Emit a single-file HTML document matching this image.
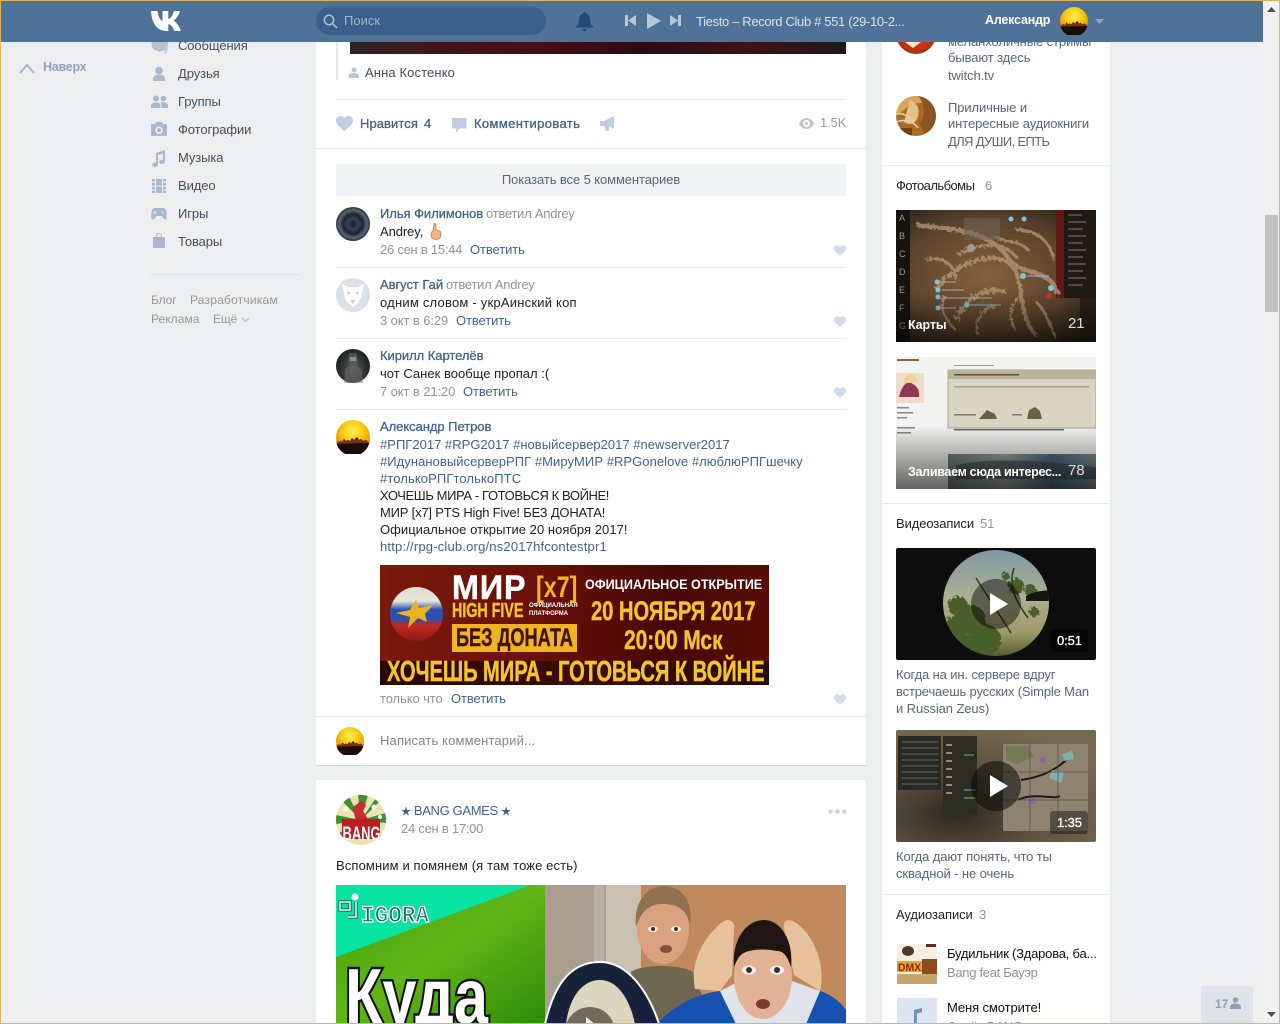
<!DOCTYPE html>
<html lang="ru"><head><meta charset="utf-8"><title>VK</title>
<style>
html,body{margin:0;padding:0;width:1280px;height:1024px;overflow:hidden;background:#edeef0}
body{font-family:"Liberation Sans","Noto Sans CJK SC",sans-serif;font-size:13px;color:#000;position:relative}
.t,.b,svg.a{position:absolute}
.t{white-space:nowrap;line-height:17px;letter-spacing:-.1px}
.l{color:#2a5885}.g{color:#939393}.n{color:#42648b}.m{color:#454f5b}.c{color:#222}
.s{color:#656565}.w{color:#fff}
.nm{color:#42648b;-webkit-text-stroke:.3px #42648b;letter-spacing:-.05px}
.h{background:#e7e8ec;height:1px}
.ava{position:absolute;border-radius:50%;overflow:hidden}
</style></head><body>

<svg width="0" height="0" style="position:absolute"><defs>
<radialGradient id="sg" cx=".5" cy=".32" r=".62"><stop offset="0" stop-color="#ffee5a"/><stop offset=".5" stop-color="#f9cb0e"/><stop offset=".85" stop-color="#ee9c06"/><stop offset="1" stop-color="#d97f05"/></radialGradient>
<filter id="rough" x="-5%" y="-5%" width="110%" height="110%"><feTurbulence type="fractalNoise" baseFrequency=".35" numOctaves="2" seed="4"/><feDisplacementMap in="SourceGraphic" scale="7"/></filter>
<symbol id="sun" viewBox="0 0 34 34"><circle cx="17" cy="17" r="17" fill="url(#sg)"/><path d="M1 23l3-2 2 1 2-3 2 2 2-1 2 1 2-3 2 2 3-3 2 3 2-1 2 2 3-1 3 3v1a17 17 0 0 1-32 1z" fill="#1a0c06"/><path d="M0 21l5-1 6 1 7-2 8 1 8 1v2l-34 1z" fill="#c85a08" opacity=".5"/></symbol>
<symbol id="hrt" viewBox="0 0 17 15"><path d="M8.500 15C3 10.500 0 8 0 4.500 0 2 2 0 4.500 0c1.600 0 3 .8 4 2.300C9.500.8 11 0 12.500 0 15 0 17 2 17 4.500 17 8 14 10.500 8.500 15z" fill="#cfdbe8"/></symbol>
</defs></svg>

<!-- main column card -->
<div class="b" style="left:316px;top:0;width:550px;height:765px;background:#fff;border-bottom:1px solid #d7d8db;border-right:1px solid #e7e8ec"></div>
<div class="b" style="left:316px;top:780px;width:550px;height:244px;background:#fff;border-radius:2px 2px 0 0;border-right:1px solid #e7e8ec"></div>
<!-- right column card -->
<div class="b" style="left:881px;top:0;width:230px;height:1024px;background:#fff;border-left:1px solid #e7e8ec;border-right:1px solid #e7e8ec;box-sizing:border-box"></div>

<!-- left menu -->
<svg class="a" style="left:19px;top:61px" width="16" height="14" viewBox="0 0 16 14"><path d="M1 12L8 4l7 8" fill="none" stroke="#a9b7c8" stroke-width="2"/></svg>
<div class="t" style="left:43px;top:59px;color:#93a3b8;font-weight:bold;font-size:12.500px;letter-spacing:-.25px">Наверх</div>

<svg class="a" style="left:151px;top:38px" width="18" height="16" viewBox="0 0 18 16"><path d="M8 0a7.500 6.500 0 0 0 0 13l-1 1 4-1a7 6 0 0 0-3-13z" fill="#b3c1d3"/><path d="M15 6c2 2 3 6 0 8l1 2-3-1z" fill="#c2cedc"/></svg>
<div class="t m" style="left:178px;top:37px">Сообщения</div>
<svg class="a" style="left:151px;top:66px" width="16" height="16" viewBox="0 0 16 16"><circle cx="8" cy="4.500" r="3.800" fill="#a9b9cd"/><path d="M2 15v-2c0-3 3-4.500 6-4.500s6 1.500 6 4.500v2z" fill="#a9b9cd"/></svg>
<div class="t m" style="left:178px;top:65px">Друзья</div>
<svg class="a" style="left:151px;top:95px" width="17" height="14" viewBox="0 0 17 14"><circle cx="5" cy="3.500" r="3" fill="#a9b9cd"/><circle cx="12.500" cy="3.500" r="2.800" fill="#a9b9cd"/><path d="M0 13v-2c0-2.500 2.500-3.500 5-3.500s4.500 1 4.500 3.500v2zM10.500 13v-3c0-1-.5-2-1-2.500 3-1 7.500 0 7.500 3v2.500z" fill="#a9b9cd"/></svg>
<div class="t m" style="left:178px;top:93px">Группы</div>
<svg class="a" style="left:151px;top:122px" width="16" height="15" viewBox="0 0 16 15"><path fill-rule="evenodd" d="M1 2h3l1-2h6l1 2h3a1 1 0 0 1 1 1v10a1 1 0 0 1-1 1H1a1 1 0 0 1-1-1V3a1 1 0 0 1 1-1zm7 2.500a3.800 3.800 0 1 0 0 7.600 3.800 3.800 0 0 0 0-7.600z" fill="#a9b9cd"/><circle cx="8" cy="8.300" r="2" fill="#a9b9cd"/></svg>
<div class="t m" style="left:178px;top:121px">Фотографии</div>
<svg class="a" style="left:151px;top:150px" width="16" height="17" viewBox="0 0 16 17"><path d="M5 3l9-3v11.500c0 1.500-1.300 2.500-3 2.500s-2.700-1-2.700-2.200 1.300-2.300 3.700-2.100V3.500L7 5v9.500C7 16 5.700 17 4 17s-2.700-1-2.700-2.200S2.600 12.500 5 12.700z" fill="#a9b9cd"/></svg>
<div class="t m" style="left:178px;top:149px">Музыка</div>
<svg class="a" style="left:152px;top:179px" width="14" height="14" viewBox="0 0 14 14"><g fill="#a9b9cd"><rect x="4" y="0" width="6" height="6.500"/><rect x="4" y="7.500" width="6" height="6.500"/><rect x="0" y="0" width="3" height="2.500"/><rect x="0" y="3.800" width="3" height="2.800"/><rect x="0" y="7.900" width="3" height="2.500"/><rect x="0" y="11.500" width="3" height="2.500"/><rect x="11" y="0" width="3" height="2.500"/><rect x="11" y="3.800" width="3" height="2.800"/><rect x="11" y="7.900" width="3" height="2.500"/><rect x="11" y="11.500" width="3" height="2.500"/></g></svg>
<div class="t m" style="left:178px;top:177px">Видео</div>
<svg class="a" style="left:151px;top:208px" width="16" height="12" viewBox="0 0 16 12"><path fill-rule="evenodd" d="M4 0h8c2 0 3 1.500 3.500 5 .5 3 .5 6-1 6.500-1.500.5-3-2.500-4-3.500H5.500c-1 1-2.500 4-4 3.500S0 8 .5 5C1 1.500 2 0 4 0zm-.5 3v1.200H2.300v1h1.200v1.200h1V5.200h1.200v-1H4.500V3zm8 .5a.8.8 0 1 0 0 1.600.8.8 0 0 0 0-1.600z" fill="#a9b9cd"/></svg>
<div class="t m" style="left:178px;top:205px">Игры</div>
<svg class="a" style="left:153px;top:233px" width="12" height="15" viewBox="0 0 12 15"><path d="M0 4h3V3a3 3 0 0 1 6 0v1h3v11H0zM4 4h4V3a2 2 0 0 0-4 0z" fill="#a9b9cd"/></svg>
<div class="t m" style="left:178px;top:233px">Товары</div>
<div class="b h" style="left:151px;top:274px;width:149px;background:#dfe2e8"></div>
<div class="t" style="left:151px;top:292px;font-size:12px;color:#90989f">Блог</div>
<div class="t" style="left:190px;top:292px;font-size:12px;color:#90989f;letter-spacing:.2px">Разработчикам</div>
<div class="t" style="left:151px;top:311px;font-size:12px;color:#90989f;letter-spacing:.05px">Реклама</div>
<div class="t" style="left:213px;top:311px;font-size:12px;color:#90989f">Ещё</div>
<svg class="a" style="left:241px;top:317px" width="9" height="6" viewBox="0 0 9 6"><path d="M1 1l3.500 3.500L8 1" fill="none" stroke="#b5bcc6" stroke-width="1.200"/></svg>

<!-- post top -->
<div class="b" style="left:350px;top:42px;width:496px;height:12px;background:linear-gradient(90deg,#2a2422 0,#3d1a1a 12%,#431015 35%,#2c0d12 60%,#3a1415 80%,#1f1716 100%)"></div>
<div class="b" style="left:336px;top:42px;width:2px;height:38px;background:#e7e8ec"></div>
<svg class="a" style="left:349px;top:67px" width="10" height="12" viewBox="0 0 10 12"><circle cx="5" cy="3" r="2.500" fill="#b9c6d6"/><path d="M0 11V9c0-2 2-3 5-3s5 1 5 3v2z" fill="#b9c6d6"/></svg>
<div class="t m" style="left:365px;top:64px;letter-spacing:.12px">Анна Костенко</div>
<div class="b h" style="left:336px;top:99px;width:510px"></div>
<svg class="a" style="left:336px;top:116px" width="17" height="15" viewBox="0 0 17 15"><path d="M8.500 15C3 10.500 0 8 0 4.500 0 2 2 0 4.500 0c1.600 0 3 .8 4 2.300C9.500.8 11 0 12.500 0 15 0 17 2 17 4.500 17 8 14 10.500 8.500 15z" fill="#c0cfe0"/></svg>
<div class="t nm" style="left:360px;top:115px;letter-spacing:.07px">Нравится</div>
<div class="t nm" style="left:424px;top:115px">4</div>
<svg class="a" style="left:452px;top:118px" width="15" height="15" viewBox="0 0 15 15"><path d="M0 0h14.500v10.500H8L4 14.500v-4H0z" fill="#c0cfe0"/></svg>
<div class="t nm" style="left:474px;top:115px;letter-spacing:.36px">Комментировать</div>
<svg class="a" style="left:600px;top:116px" width="15" height="15" viewBox="0 0 15 15"><path d="M0 5h4l10-5v13L9 10.500V15H6l-1.500-5H0z" fill="#c0cfe0"/></svg>
<svg class="a" style="left:799px;top:118px" width="15" height="11" viewBox="0 0 15 11"><path fill-rule="evenodd" d="M7.500 0C11 0 13.500 2.500 15 5.500 13.500 8.500 11 11 7.500 11S1.500 8.500 0 5.500C1.500 2.500 4 0 7.500 0zm0 2a3.500 3.500 0 1 0 0 7 3.500 3.500 0 0 0 0-7zm0 2a1.500 1.500 0 1 1 0 3 1.500 1.500 0 0 1 0-3z" fill="#bcc5cf"/></svg>
<div class="t" style="left:820px;top:114px;color:#939da8">1.5K</div>
<div class="b h" style="left:316px;top:148px;width:550px"></div>

<div class="b" style="left:336px;top:164px;width:510px;height:32px;background:#f0f2f5"></div>
<div class="t" style="left:336px;top:171px;width:510px;text-align:center;color:#55677d">Показать все 5 комментариев</div>

<!-- comment 1 -->
<div class="ava" style="left:336px;top:207px;width:34px;height:34px;background:radial-gradient(circle at 50% 50%,#101a28 0,#37465c 22%,#1b2230 40%,#5a6474 58%,#12161e 76%,#1a1e26 100%)"></div>
<div class="t nm" style="left:380px;top:205px">Илья Филимонов</div>
<div class="t g" style="left:486px;top:205px;letter-spacing:-.25px">ответил Andrey</div>
<div class="t c" style="left:380px;top:223px">Andrey,</div>
<svg class="a" style="left:428px;top:223px" width="14" height="17" viewBox="0 0 14 17"><path d="M6 1c1-1 2 0 2 1v5l2 .5c2 .5 3 1 3 3 0 3-1 6-5 6-3 0-5-2-5-5 0-2 1-3 2-3.500z" fill="#f2b48b" stroke="#d8703c" stroke-width=".8"/></svg>
<div class="t g" style="left:380px;top:241px;letter-spacing:-.25px">26 сен в 15:44</div>
<div class="t n" style="left:470px;top:241px">Ответить</div>
<svg class="a" style="left:834px;top:245px" width="12" height="11"><use href="#hrt"/></svg>
<div class="b h" style="left:336px;top:267px;width:510px"></div>

<!-- comment 2 -->
<div class="ava" style="left:336px;top:278px;width:34px;height:34px;background:#d9e0ea"></div>
<svg class="a" style="left:336px;top:278px" width="34" height="34" viewBox="0 0 34 34"><path d="M6 6l6 3h10l6-3-2 9c0 5-4 11-9 14-5-3-9-9-9-14z" fill="#fff"/><circle cx="12.500" cy="15" r="1.400" fill="#c3ccd8"/><circle cx="21.500" cy="15" r="1.400" fill="#c3ccd8"/><path d="M14.500 22h5l-2.500 4z" fill="#c3ccd8"/></svg>
<div class="t nm" style="left:380px;top:276px">Август Гай</div>
<div class="t g" style="left:446px;top:276px;letter-spacing:-.25px">ответил Andrey</div>
<div class="t c" style="left:380px;top:294px;letter-spacing:.22px">одним словом - укрАинский коп</div>
<div class="t g" style="left:380px;top:312px">3 окт в 6:29</div>
<div class="t n" style="left:456px;top:312px">Ответить</div>
<svg class="a" style="left:834px;top:316px" width="12" height="11"><use href="#hrt"/></svg>
<div class="b h" style="left:336px;top:338px;width:510px"></div>

<!-- comment 3 -->
<div class="ava" style="left:336px;top:349px;width:34px;height:34px;background:radial-gradient(ellipse at 50% 60%,#4d5350 0,#3a403e 35%,#1d2222 70%,#2f3332 100%)"></div>
<svg class="a" style="left:336px;top:349px" width="34" height="34" viewBox="0 0 34 34"><path d="M13 4h8l1 8-2 3 6 6 1 13H8l1-13 5-6-2-3z" fill="#6d7270" opacity=".5"/><rect x="14" y="8" width="6" height="4" fill="#c9cdc9" opacity=".5"/></svg>
<div class="t nm" style="left:380px;top:347px">Кирилл Картелёв</div>
<div class="t c" style="left:380px;top:365px;letter-spacing:.02px">чот Санек вообще пропал :(</div>
<div class="t g" style="left:380px;top:383px">7 окт в 21:20</div>
<div class="t n" style="left:463px;top:383px">Ответить</div>
<svg class="a" style="left:834px;top:387px" width="12" height="11"><use href="#hrt"/></svg>
<div class="b h" style="left:336px;top:409px;width:510px"></div>

<!-- comment 4 -->
<svg class="a" style="left:336px;top:420px" width="34" height="34"><use href="#sun"/></svg>
<div class="t nm" style="left:380px;top:418px">Александр Петров</div>
<div class="t n" style="left:380px;top:436px;letter-spacing:.02px">#РПГ2017 #RPG2017 #новыйсервер2017 #newserver2017</div>
<div class="t n" style="left:380px;top:453px;letter-spacing:.05px">#ИдунановыйсерверРПГ #МируМИР #RPGonelove #люблюРПГшечку</div>
<div class="t n" style="left:380px;top:470px;letter-spacing:.1px">#толькоРПГтолькоПТС</div>
<div class="t c" style="left:380px;top:487px;letter-spacing:-.4px">ХОЧЕШЬ МИРА - ГОТОВЬСЯ К ВОЙНЕ!</div>
<div class="t c" style="left:380px;top:504px;letter-spacing:-.2px">МИР [x7] PTS High Five! БЕЗ ДОНАТА!</div>
<div class="t c" style="left:380px;top:521px;letter-spacing:.04px">Официальное открытие 20 ноября 2017!</div>
<div class="t n" style="left:380px;top:538px;letter-spacing:.19px">http://rpg-club.org/ns2017hfcontestpr1</div>

<!-- banner -->
<div class="b" style="left:380px;top:565px;width:389px;height:120px;background:#4a0906;overflow:hidden">
  <div class="b" style="left:0;top:0;width:389px;height:120px;background:linear-gradient(90deg,#7a1a0c 0,#6a1009 40%,#470806 75%,#5a0d08 100%)"></div>
  <div class="b" style="left:0;top:96px;width:389px;height:24px;background:linear-gradient(90deg,#2a0a04,#3a0c05 50%,#2a0a04)"></div>
  <div class="b" style="left:10px;top:22px;width:53px;height:54px;border-radius:50%;background:linear-gradient(180deg,#dfe0d6 0,#e8e4d8 26%,#2c50b0 42%,#2c50b0 58%,#c4271e 72%,#8a1a12 100%)"></div>
  <svg class="a" style="left:13px;top:32px" width="48" height="36" viewBox="0 0 48 36"><path d="M3 16l14-3 6-10 3 8 14-3-8 9 2 8-9-4-10 10 2-11z" fill="#e8b320"/></svg>
  <div class="t w" style="left:72px;top:5px;font:bold 34px/36px 'Liberation Sans',sans-serif;letter-spacing:1px;transform:scaleX(.95);transform-origin:0 0;-webkit-text-stroke:.5px #fff">МИР</div>
  <div class="t" style="left:156px;top:5px;font:bold 30px/36px 'Liberation Sans',sans-serif;color:#f0b422;transform:scaleX(.78);transform-origin:0 0">[x7]</div>
  <div class="t" style="left:72px;top:33px;font:bold 20px/26px 'Liberation Sans',sans-serif;color:#f5c32b;transform:scaleX(.72);transform-origin:0 0;-webkit-text-stroke:.4px #f5c32b">HIGH FIVE</div>
  <div class="t w" style="left:149px;top:37px;font:bold 6px/8px 'Liberation Sans',sans-serif;letter-spacing:0">ОФИЦИАЛЬНАЯ</div>
  <div class="t w" style="left:149px;top:45px;font:bold 6px/8px 'Liberation Sans',sans-serif;letter-spacing:0">ПЛАТФОРМА</div>
  <div class="b" style="left:72px;top:59px;width:125px;height:28px;background:#f0b422"></div>
  <div class="t" style="left:76px;top:59px;font:bold 25px/29px 'Liberation Sans',sans-serif;color:#421405;transform:scaleX(.73);transform-origin:0 0;-webkit-text-stroke:.4px #421405">БЕЗ ДОНАТА</div>
  <div class="t w" style="left:205px;top:11px;font:bold 13.500px/17px 'Liberation Sans',sans-serif;letter-spacing:0;transform:scaleX(.935);transform-origin:0 0">ОФИЦИАЛЬНОЕ ОТКРЫТИЕ</div>
  <div class="t" style="left:211px;top:30px;font:bold 27px/32px 'Liberation Sans',sans-serif;color:#f5c32b;transform:scaleX(.75);transform-origin:0 0;-webkit-text-stroke:.4px #f5c32b">20 НОЯБРЯ 2017</div>
  <div class="t" style="left:244px;top:59px;font:bold 27px/32px 'Liberation Sans',sans-serif;color:#f5c32b;transform:scaleX(.78);transform-origin:0 0;-webkit-text-stroke:.4px #f5c32b">20:00 Мск</div>
  <div class="t" style="left:7px;top:92px;font:bold 29px/30px 'Liberation Sans',sans-serif;color:#f5c32b;transform:scaleX(.695);transform-origin:0 0;-webkit-text-stroke:.5px #f5c32b">ХОЧЕШЬ МИРА - ГОТОВЬСЯ К ВОЙНЕ</div>
</div>
<div class="t g" style="left:380px;top:690px">только что</div>
<div class="t n" style="left:451px;top:690px">Ответить</div>
<svg class="a" style="left:834px;top:694px" width="12" height="11"><use href="#hrt"/></svg>
<div class="b h" style="left:316px;top:716px;width:550px"></div>
<svg class="a" style="left:336px;top:727px" width="28" height="28"><use href="#sun"/></svg>
<div class="t" style="left:380px;top:732px;color:#7f8790;letter-spacing:.16px">Написать комментарий...</div>

<!-- post 2 -->
<svg class="a" style="left:336px;top:795px" width="50" height="50" viewBox="0 0 50 50">
  <defs><clipPath id="bc"><circle cx="25" cy="25" r="25"/></clipPath></defs>
  <g clip-path="url(#bc)">
  <rect width="50" height="50" fill="#e9e2b4"/>
  <g fill="#3f8f2a"><path d="M25 25L0 0h12zM25 25L22 0h10zM25 25L42 0h8zM25 25L50 18v10zM25 25L50 44v6zM25 25L0 20v9zM25 25L0 40v10z"/></g>
  <path d="M17 12l8-6 5 4-3 6 5 8-6 5-7-6z" fill="#c92d2d"/>
  <rect x="6" y="24" width="38" height="20" fill="#bb1d24"/>
  <circle cx="10" cy="14" r="2.500" fill="#fff"/><circle cx="38" cy="12" r="2.500" fill="#fff"/><circle cx="44" cy="22" r="2" fill="#fff"/>
  </g>
  <text x="6.500" y="45" font-family="Liberation Sans, sans-serif" font-size="19" font-weight="bold" fill="#fff" textLength="38" lengthAdjust="spacingAndGlyphs">BANG</text>
</svg>
<div class="t n" style="left:401px;top:802px;letter-spacing:-.35px"><span style="font-size:10px">★</span> BANG GAMES <span style="font-size:10px">★</span></div>
<div class="t g" style="left:401px;top:820px;letter-spacing:-.25px">24 сен в 17:00</div>
<svg class="a" style="left:828px;top:809px" width="19" height="5" viewBox="0 0 19 5"><circle cx="2.500" cy="2.500" r="2.300" fill="#cfd5dc"/><circle cx="9.500" cy="2.500" r="2.300" fill="#cfd5dc"/><circle cx="16.500" cy="2.500" r="2.300" fill="#cfd5dc"/></svg>
<div class="t c" style="left:336px;top:857px;letter-spacing:.12px">Вспомним и помянем (я там тоже есть)</div>

<!-- big video thumb -->
<svg class="a" style="left:336px;top:885px" width="510" height="139" viewBox="0 0 510 139">
  <defs>
    <linearGradient id="lf" x1="0" y1="0" x2="1" y2="1"><stop offset="0" stop-color="#3ea011"/><stop offset=".5" stop-color="#62b516"/><stop offset="1" stop-color="#2f8a0a"/></linearGradient>
  </defs>
  <rect width="209" height="139" fill="url(#lf)"/>
  <path d="M0 0h195L0 72z" fill="#07e3a0"/>
  <rect x="209" width="301" height="139" fill="#c1895c"/>
  <rect x="209" width="96" height="139" fill="#a99e90"/>
  <rect x="270" width="35" height="139" fill="#c8c0b0"/>
  <rect x="258" width="10" height="139" fill="#b8b0a2"/>
  <path d="M293 139l2-52c10-8 50-8 62 0l20 52z" fill="#6e6650"/>
  <ellipse cx="327" cy="44" rx="26" ry="35" fill="#d9a27f"/>
  <path d="M300 42c-3-26 12-41 28-41s30 14 26 38c-4-16-14-20-28-20-12 0-20 6-26 23z" fill="#91714f"/>
  <ellipse cx="317" cy="44" rx="5" ry="3" fill="#f5ecdf"/><ellipse cx="340" cy="44" rx="5" ry="3" fill="#f5ecdf"/>
  <circle cx="317" cy="44" r="2" fill="#333"/><circle cx="340" cy="44" r="2" fill="#333"/>
  <ellipse cx="330" cy="64" rx="6" ry="4" fill="#8c4c40"/>
  <path d="M321 139c16-18 38-30 63-33l16 33zM470 139l14-33c10 3 20 10 26 19v14z" fill="#1951b0"/>
  <path d="M400 139l-16-33 20-10 52 0 28 10-14 33z" fill="#dfe3ea"/>
  <path d="M359 104C354 80 365 55 385 38c7-6 15-2 13 6l-2 46-12 16zM484 106c6-26-6-56-24-68-8-6-14-2-12 6l10 46z" fill="#e7c29c"/>
  <ellipse cx="427" cy="92" rx="29" ry="42" fill="#e2b296"/>
  <path d="M398 82c-2-28 12-46 29-47s31 20 28 47c-4-12-8-16-14-16-10-2-20-2-28 0-8 2-11 6-15 16z" fill="#1f1512"/>
  <ellipse cx="413" cy="85" rx="7" ry="4.500" fill="#f8f2ea"/><ellipse cx="441" cy="85" rx="7" ry="4.500" fill="#f8f2ea"/>
  <circle cx="413" cy="85" r="3" fill="#33302e"/><circle cx="441" cy="85" r="3" fill="#33302e"/>
  <ellipse cx="427" cy="119" rx="7" ry="5" fill="#7c3a33"/>
  <path d="M209 139c8-34 22-62 55-62 30 0 50 34 59 62z" fill="#16223a" stroke="#fff" stroke-width="2"/>
  <path d="M230 139c3-26 16-44 34-44s30 20 35 44z" fill="#ddd5bf"/>
  <circle cx="254" cy="147" r="25" fill="#4e463e" opacity=".75"/>
  <path d="M250 132v8h10z" fill="#fff"/>
  <path d="M4 17h10v8H4zM12 32h8V17" fill="none" stroke="#16423a" stroke-width="3"/>
  <path d="M4 17h10v8H4zM12 32h8V17" fill="none" stroke="#fff" stroke-width="1.500"/>
  <circle cx="19" cy="12" r="3.500" fill="#fff"/>
  <text x="25" y="37" font-family="Liberation Mono, monospace" font-size="23" font-weight="bold" fill="#1c6e54" stroke="#fff" stroke-width="1.300" textLength="68" lengthAdjust="spacingAndGlyphs">IGORA</text>
  <text x="9" y="138" font-family="Liberation Sans, sans-serif" font-size="78" font-weight="bold" fill="#fff" stroke="#111" stroke-width="5" paint-order="stroke" textLength="143" lengthAdjust="spacingAndGlyphs">Куда</text>
</svg>

<!-- right column -->
<div class="ava" style="left:896px;top:14px;width:40px;height:40px;background:radial-gradient(circle at 50% 40%,#e23c1c 0,#cc3018 55%,#7d3a12 88%)"></div>
<svg class="a" style="left:905px;top:42px" width="18" height="8"><path d="M0 0l8 6 8-6z" fill="#f7e6d8"/></svg>
<div class="t" style="left:948px;top:33px;color:#55677d">меланхоличные стримы</div>
<div class="t" style="left:948px;top:49px;color:#55677d">бывают здесь</div>
<div class="t s" style="left:948px;top:67px">twitch.tv</div>
<svg class="a" style="left:896px;top:96px" width="40" height="40" viewBox="0 0 40 40"><defs><clipPath id="ac"><circle cx="20" cy="20" r="20"/></clipPath></defs><g clip-path="url(#ac)"><rect width="40" height="40" fill="#a96c28"/><path d="M0 0h40v12C30 6 18 4 8 14L0 20z" fill="#d7a45a"/><path d="M22 0c6 6 8 18 2 28l6 12h10V0z" fill="#8a5520"/><path d="M14 4c6 2 10 8 8 16s-8 10-14 6" fill="#e4c08a"/><path d="M0 26c10-4 18 0 22 6M0 18c8-2 14 4 18 8" stroke="#e9d2ac" stroke-width="1.500" fill="none"/><path d="M0 32h16v8H0z" fill="#6d4315"/></g></svg>
<div class="t" style="left:948px;top:99px;color:#55677d">Приличные и</div>
<div class="t" style="left:948px;top:115px;color:#55677d">интересные аудиокниги</div>
<div class="t" style="left:948px;top:133px;color:#656565;letter-spacing:-.65px">ДЛЯ ДУШИ, ЕПТЬ</div>
<div class="b h" style="left:882px;top:165px;width:228px"></div>
<div class="t c" style="left:896px;top:177px;letter-spacing:-.55px">Фотоальбомы</div>
<div class="t g" style="left:985px;top:177px">6</div>

<!-- album 1 -->
<svg class="a" style="left:896px;top:210px" width="200" height="132" viewBox="0 0 200 132">
  <defs><radialGradient id="map" cx=".45" cy=".5" r=".65"><stop offset="0" stop-color="#85603c"/><stop offset=".65" stop-color="#5c432c"/><stop offset="1" stop-color="#2b241b"/></radialGradient>
  <linearGradient id="bot" x1="0" y1="0" x2="0" y2="1"><stop offset="0" stop-color="#000" stop-opacity="0"/><stop offset="1" stop-color="#000" stop-opacity=".5"/></linearGradient></defs>
  <rect width="200" height="132" fill="url(#map)" rx="2"/>
  <rect width="14" height="132" fill="#17140f"/>
  <rect x="168" width="32" height="88" fill="#211913"/><rect x="160" width="8" height="88" fill="#5f1a16"/>
  <rect x="184" y="88" width="16" height="44" fill="#2a2119"/>
  <g fill="none" stroke="#b59a78" opacity=".75" filter="url(#rough)">
    <path d="M20 15C60 20 90 20 110 45c15 25 45 10 52 40" stroke-width="4.500"/>
    <path d="M40 80c20-30 60-40 75-25s5 50 25 70M60 110c10-20 25-35 50-28" stroke-width="4"/>
    <path d="M120 20c25 0 35 15 38 30M30 50c15-5 30 5 30 20M62 45c25-15 50-12 60 5M140 92c10 8 14 24 20 36M100 28c12 4 24 2 34 14" stroke-width="3"/>
    <path d="M60 120c-8-6-20-24-10-34M82 125c-4-14 2-26 18-30M120 120c-8-10-6-24 2-32" stroke-width="2.500"/>
  </g>
  <path d="M68 8h36v22H68z" fill="#6f6553" opacity=".55"/>
  <g fill="#7fc4d9"><circle cx="41" cy="72" r="2.500"/><circle cx="42" cy="80" r="2.500"/><circle cx="42" cy="87" r="2.500"/><circle cx="42" cy="98" r="2.500"/><circle cx="71" cy="95" r="2.500"/><circle cx="127" cy="66" r="3"/><circle cx="155" cy="78" r="3"/><circle cx="115" cy="9" r="2.500"/><circle cx="128" cy="9" r="2.500"/><circle cx="75" cy="38" r="4" fill="#9a9f9d"/></g>
  <circle cx="153" cy="86" r="3" fill="#c33"/>
  <g font-family="Liberation Sans, sans-serif" font-size="9" fill="#9b9b90"><text x="3" y="11">A</text><text x="3" y="29">B</text><text x="3" y="47">C</text><text x="3" y="65">D</text><text x="3" y="83">E</text><text x="3" y="101">F</text><text x="3" y="119">G</text></g>
  <g stroke="#8fb3c2" stroke-width="1.500" opacity=".7"><path d="M46 72h14M46 80h22M46 88h50M46 98h14M75 95h30M131 66h22"/></g>
  <g stroke="#c6c0b6" stroke-width="1" opacity=".6"><path d="M172 5h14M172 12h18M172 19h15M172 26h18M172 33h15M172 40h18M172 47h15M172 54h18M172 61h15M172 68h18M172 75h15"/></g>
  <rect y="82" width="200" height="50" fill="url(#bot)"/>
</svg>
<div class="t w" style="left:908px;top:317px;font-weight:bold;font-size:12.500px">Карты</div>
<div class="t w" style="left:1068px;top:315px;font-size:15px;opacity:.85">21</div>

<!-- album 2 -->
<svg class="a" style="left:896px;top:357px" width="200" height="132" viewBox="0 0 200 132">
  <defs><linearGradient id="fade" x1="0" y1="0" x2="0" y2="1"><stop offset="0" stop-color="#000" stop-opacity="0"/><stop offset="1" stop-color="#000" stop-opacity=".6"/></linearGradient>
  <linearGradient id="tank" x1="0" y1="0" x2="1" y2="0"><stop offset="0" stop-color="#6c7f78"/><stop offset=".4" stop-color="#9aa4a6"/><stop offset=".7" stop-color="#4d6a80"/><stop offset="1" stop-color="#7f8f96"/></linearGradient></defs>
  <rect width="200" height="132" fill="#f3f3f1"/>
  <rect x="52" y="13" width="148" height="58" fill="#d9d5c3" stroke="#a8a48f"/>
  <rect x="52" y="13" width="148" height="9" fill="#b8b399"/>
  <rect x="0" y="16" width="28" height="30" fill="#eedccc"/>
  <path d="M3 40c3-12 8-16 12-14s9 5 8 14z" fill="#8f3a52"/>
  <path d="M7 26c1-6 4-9 7-9s7 3 7 9z" fill="#ecd19c"/>
  <rect x="52" y="97" width="148" height="35" fill="url(#tank)"/>
  <path d="M60 108c40-8 90-4 140 2v12H60z" fill="#3f4c50" opacity=".7"/>
  <rect x="58" y="29" width="135" height="1.500" fill="#8b8775" opacity=".7"/>
  <rect x="58" y="17" width="65" height="1.500" fill="#55503f"/>
  <rect x="58" y="8" width="40" height="1" fill="#999"/>
  <rect x="1" y="2" width="22" height="2" fill="#a05b43"/>
  <rect x="1" y="50" width="12" height="1.500" fill="#888"/><rect x="1" y="55" width="16" height="1.500" fill="#888"/><rect x="1" y="60" width="10" height="1.500" fill="#888"/><rect x="1" y="70" width="18" height="1.500" fill="#888"/><rect x="1" y="75" width="14" height="1.500" fill="#888"/>
  <rect x="58" y="72" width="110" height="1.500" fill="#666"/>
  <rect x="58" y="57" width="22" height="1.500" fill="#777"/>
  <rect x="116" y="57" width="10" height="1.500" fill="#777"/>
  <path d="M83 62l8-9 8 4 2 5zM131 62l2-9 6-3 5 4 2 8z" fill="#6a6240"/>
  <rect y="68" width="200" height="64" fill="url(#fade)"/>
</svg>
<div class="t w" style="left:908px;top:464px;font-weight:bold;font-size:12.500px;letter-spacing:-.3px">Заливаем сюда интерес...</div>
<div class="t w" style="left:1068px;top:462px;font-size:15px;opacity:.85">78</div>
<div class="b h" style="left:882px;top:503px;width:228px"></div>
<div class="t c" style="left:896px;top:515px">Видеозаписи</div>
<div class="t g" style="left:980px;top:515px">51</div>

<!-- video 1 -->
<svg class="a" style="left:896px;top:548px" width="200" height="112" viewBox="0 0 200 112">
  <defs><linearGradient id="sky" x1="0" y1="0" x2="0" y2="1"><stop offset="0" stop-color="#7c98a4"/><stop offset=".45" stop-color="#adb092"/><stop offset=".75" stop-color="#a09a6a"/><stop offset="1" stop-color="#4a5528"/></linearGradient>
  <clipPath id="sc"><circle cx="100" cy="55" r="53"/></clipPath></defs>
  <rect width="200" height="112" rx="2" fill="#0d0d0d"/>
  <g clip-path="url(#sc)">
  <rect width="200" height="112" fill="url(#sky)"/>
  <g fill="#4a5f2c" filter="url(#rough)"><circle cx="62" cy="58" r="10"/><circle cx="75" cy="72" r="15"/><circle cx="60" cy="80" r="12"/><circle cx="90" cy="92" r="15"/><circle cx="72" cy="100" r="13"/><circle cx="120" cy="38" r="8"/><circle cx="134" cy="42" r="6"/><circle cx="110" cy="28" r="4"/><circle cx="138" cy="64" r="5"/></g>
  <path d="M80 30l35 55M118 20c-5 15-2 28 14 50" stroke="#3a3a1a" stroke-width="1.500" fill="none"/>
  <path d="M130 48c8-5 15-5 25-6v11h-25z" fill="#16160f"/>
  </g>
  <circle cx="100" cy="56" r="25" fill="#000" opacity=".45"/>
  <path d="M94 45v22l18-11z" fill="#fff"/>
  <rect x="154" y="81" width="38" height="23" rx="3" fill="#000" opacity=".4"/>
</svg>
<div class="t w" style="left:1057px;top:632px;font-size:13px;letter-spacing:-.1px;-webkit-text-stroke:.3px #fff">0:51</div>
<div class="t" style="left:896px;top:666px;color:#55677d;letter-spacing:-.13px">Когда на ин. сервере вдруг</div>
<div class="t" style="left:896px;top:683px;color:#55677d;letter-spacing:-.16px">встречаешь русских (Simple Man</div>
<div class="t" style="left:896px;top:700px;color:#55677d">и Russian Zeus)</div>

<!-- video 2 -->
<svg class="a" style="left:896px;top:730px" width="200" height="112" viewBox="0 0 200 112">
  <defs><radialGradient id="ter" cx=".3" cy=".75" r=".8"><stop offset="0" stop-color="#2f2820"/><stop offset=".5" stop-color="#5c5040"/><stop offset="1" stop-color="#75684f"/></radialGradient></defs>
  <rect width="200" height="112" rx="2" fill="url(#ter)"/>
  <rect x="2" y="6" width="43" height="54" fill="#2a2a24"/>
  <rect x="47" y="6" width="34" height="78" fill="#2c2c24"/>
  <rect x="107" y="14" width="85" height="87" fill="#8d8370"/>
  <path d="M110 16h22l6 10-16 8-12-4z" fill="#727b55"/>
  <path d="M125 50c15-2 35-8 50-25M122 70c15-8 35 0 42-4" stroke="#201913" stroke-width="2" fill="none"/>
  <circle cx="147" cy="30" r="3" fill="#8e5ea8"/><circle cx="137" cy="71" r="3" fill="#9060a8"/>
  <path d="M156 40l12 3-3 10-12-5z" fill="#7fb0ae"/><path d="M166 24l10-3 2 8-10 2z" fill="#7fb0ae"/>
  <g stroke="#777" stroke-width="1" opacity=".8"><path d="M6 12h36M6 18h36M6 24h36M6 30h36M6 36h36M6 42h36M6 48h36M6 54h36"/></g>
  <g stroke="#ddd" stroke-width="1.500" opacity=".7"><path d="M50 15h6M50 23h6M50 31h6M50 39h6M50 47h6M50 55h6M50 63h6"/></g>
  <g stroke="#6bab4a" stroke-width="1.500" opacity=".8"><path d="M68 25h10M68 60h12M68 68h12"/></g>
  <path d="M107 42h85M107 70h85M134 14v87M162 14v87" stroke="#5a5043" stroke-width=".7"/>
  <circle cx="100" cy="56" r="25" fill="#000" opacity=".5"/>
  <path d="M94 45v22l18-11z" fill="#fff"/>
  <rect x="154" y="81" width="38" height="23" rx="3" fill="#000" opacity=".4"/>
</svg>
<div class="t w" style="left:1057px;top:814px;font-size:13px;letter-spacing:-.1px;-webkit-text-stroke:.3px #fff">1:35</div>
<div class="t" style="left:896px;top:848px;color:#55677d">Когда дают понять, что ты</div>
<div class="t" style="left:896px;top:865px;color:#55677d">сквадной - не очень</div>
<div class="b h" style="left:882px;top:894px;width:228px"></div>
<div class="t c" style="left:896px;top:906px">Аудиозаписи</div>
<div class="t g" style="left:979px;top:906px">3</div>

<svg class="a" style="left:897px;top:944px" width="40" height="40" viewBox="0 0 40 40">
  <rect width="40" height="40" fill="#f6efe2"/><rect y="17" width="26" height="11" fill="#e8a52a"/>
  <text x="1" y="27" font-family="Liberation Sans, sans-serif" font-size="11" font-weight="bold" fill="#8c2a10" textLength="23" lengthAdjust="spacingAndGlyphs">DMX</text>
  <rect x="25" y="15" width="15" height="19" fill="#8c4a20"/><ellipse cx="11" cy="7" rx="6" ry="5" fill="#4a3a2a"/><rect x="29" y="0" width="10" height="3" fill="#5a2a20"/><rect y="30" width="40" height="10" fill="#c9a66c"/>
</svg>
<div class="t" style="left:947px;top:945px;color:#111;letter-spacing:-.22px">Будильник (Здарова, ба...</div>
<div class="t g" style="left:947px;top:964px;letter-spacing:-.3px">Bang feat Бауэр</div>
<div class="b" style="left:897px;top:998px;width:40px;height:26px;background:#dde6f0"></div>
<svg class="a" style="left:909px;top:1008px" width="14" height="16" viewBox="0 0 14 16"><path d="M5 16V2l8-2v4L8 5.500V16z" fill="#6f93b8"/></svg>
<div class="t" style="left:947px;top:999px;color:#111">Меня смотрите!</div>
<div class="t g" style="left:947px;top:1018px">Gaelic BANG</div>

<!-- online widget -->
<div class="b" style="left:1201px;top:986px;width:52px;height:38px;background:#dee3ea;border-radius:2px 2px 0 0"></div>
<div class="t" style="left:1215px;top:996px;font-size:12px;font-weight:bold;color:#8fa0b3;letter-spacing:0">17</div>
<svg class="a" style="left:1230px;top:997px" width="11" height="12" viewBox="0 0 11 12"><circle cx="5.500" cy="3" r="2.800" fill="#8fa0b3"/><path d="M0 12v-2c0-2.500 2.500-3.500 5.500-3.500S11 7.500 11 10v2z" fill="#8fa0b3"/></svg>

<!-- scrollbar -->
<div class="b" style="left:1263px;top:0;width:17px;height:1024px;background:#f1f1f1"></div>
<div class="b" style="left:1265px;top:215px;width:13px;height:97px;background:#c1c1c1"></div>
<svg class="a" style="left:1266px;top:6px" width="11" height="7"><path d="M5.500 1L10 6H1z" fill="#505050"/></svg>
<svg class="a" style="left:1266px;top:1011px" width="11" height="7"><path d="M1 1h9L5.500 6z" fill="#505050"/></svg>

<!-- header -->
<div class="b" style="left:0;top:0;width:1263px;height:42px;background:#507299"></div>
<svg class="a" style="left:151px;top:11px" width="33" height="20" viewBox="0 0 33 20"><path d="M0 0h6.500c.4 5 2.700 9 5 10V0h5.800v8c2.400-.4 4.700-4 5.500-8h6c-1 4.800-3.800 8-6.200 9.700 2.400 1.200 5.600 4.800 7.300 10.300h-6.500c-1.100-3.500-3.700-6.400-6.100-7v7h-1.200C5.500 20 .8 12 0 0z" fill="#fff"/></svg>
<div class="b" style="left:316px;top:7px;width:230px;height:28px;border-radius:14px;background:#3a5f8b"></div>
<svg class="a" style="left:323px;top:14px" width="15" height="15" viewBox="0 0 15 15"><circle cx="6" cy="6" r="4.700" fill="none" stroke="#aebfd3" stroke-width="1.500"/><path d="M9.500 9.500L14 14" stroke="#aebfd3" stroke-width="1.500"/></svg>
<div class="t" style="left:344px;top:12px;color:#a5b7cc;letter-spacing:0">Поиск</div>
<svg class="a" style="left:576px;top:12px" width="17" height="19" viewBox="0 0 17 19"><path d="M8.500 0c1 0 1.500.7 1.500 1.500C13 2.500 14 5 14 8c0 3 1 5 3 6.500v1H0v-1C2 13 3 11 3 8c0-3 1-5.500 4-6.500C7 .7 7.500 0 8.500 0zM6 17h5c0 1-1 2-2.500 2S6 18 6 17z" fill="#224b7a"/></svg>
<svg class="a" style="left:625px;top:15px" width="11" height="11" viewBox="0 0 11 11"><path d="M0 0h3v11H0zM11 0v11L3 5.500z" fill="#b7c6d8"/></svg>
<svg class="a" style="left:647px;top:13px" width="14" height="16" viewBox="0 0 14 16"><path d="M0 0l14 8-14 8z" fill="#b7c6d8"/></svg>
<svg class="a" style="left:670px;top:15px" width="11" height="11" viewBox="0 0 11 11"><path d="M11 0H8v11h3zM0 0v11l8-5.500z" fill="#b7c6d8"/></svg>
<div class="t" style="left:696px;top:13px;color:#d8e2ee;letter-spacing:-.34px">Tiesto – Record Club # 551 (29-10-2...</div>
<div class="t w" style="left:985px;top:12px;font-weight:bold;font-size:12.500px;letter-spacing:-.2px">Александр</div>
<svg class="a" style="left:1060px;top:7px" width="28" height="28"><use href="#sun"/></svg>
<svg class="a" style="left:1095px;top:19px" width="9" height="5"><path d="M0 0h9L4.500 5z" fill="#8fa7c2"/></svg>

<!-- window frame -->
<div class="b" style="left:0;top:0;width:1280px;height:1px;background:#e5b25d"></div>
<div class="b" style="left:0;top:1023px;width:1280px;height:1px;background:#e5b25d"></div>
<div class="b" style="left:0;top:0;width:1px;height:1024px;background:#e5b25d"></div>
<div class="b" style="left:1279px;top:0;width:1px;height:1024px;background:#e5b25d"></div>
</body></html>
